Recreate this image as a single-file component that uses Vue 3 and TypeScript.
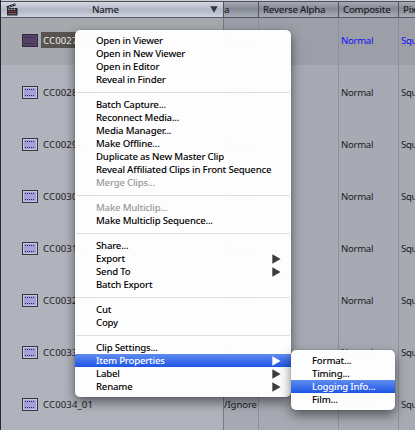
<script setup lang="ts">
interface Clip {
  name: string
  selected?: boolean
}
interface MenuItem {
  label: string
  arrow?: boolean
  disabled?: boolean
  active?: boolean
}

const clips: Clip[] = [
  { name: 'CC0027_01', selected: true },
  { name: 'CC0028_01' },
  { name: 'CC0029_01' },
  { name: 'CC0030_01' },
  { name: 'CC0031_01' },
  { name: 'CC0032_01' },
  { name: 'CC0033_01' },
  { name: 'CC0034_01' },
]

const groups: MenuItem[][] = [
  [
    { label: 'Open in Viewer' },
    { label: 'Open in New Viewer' },
    { label: 'Open in Editor' },
    { label: 'Reveal in Finder' },
  ],
  [
    { label: 'Batch Capture...' },
    { label: 'Reconnect Media...' },
    { label: 'Media Manager...' },
    { label: 'Make Offline...' },
    { label: 'Duplicate as New Master Clip' },
    { label: 'Reveal Affiliated Clips in Front Sequence' },
    { label: 'Merge Clips...', disabled: true },
  ],
  [{ label: 'Make Multiclip...', disabled: true }, { label: 'Make Multiclip Sequence...' }],
  [
    { label: 'Share...' },
    { label: 'Export', arrow: true },
    { label: 'Send To', arrow: true },
    { label: 'Batch Export' },
  ],
  [{ label: 'Cut' }, { label: 'Copy' }],
  [
    { label: 'Clip Settings...' },
    { label: 'Item Properties', arrow: true, active: true },
    { label: 'Label', arrow: true },
    { label: 'Rename', arrow: true },
  ],
]

const submenu: MenuItem[] = [
  { label: 'Format...' },
  { label: 'Timing...' },
  { label: 'Logging Info...', active: true },
  { label: 'Film...' },
]
</script>

<template>
  <div class="window">
    <div class="browser">
      <div class="row header">
        <div class="cell name-head">
          <svg class="clapper" width="12" height="13" viewBox="0 0 12 13">
            <path d="M0.5 3.2 L9.2 0.3 L10 2.4 L1.2 5.2 Z" fill="#24262b" />
            <path d="M2.8 2.8 l1.5 1.1 M5.4 1.9 l1.5 1.1 M8 1.1 l1.3 1" stroke="#d5d8df" stroke-width="0.8" />
            <rect x="1" y="5" width="10.5" height="7.5" rx="0.6" fill="#24262b" />
            <path d="M2 6.3 h1.6 M4.8 6.3 h1.6 M7.6 6.3 h1.6" stroke="#d5d8df" stroke-width="1" />
            <path d="M2.2 8.5 h8" stroke="#9b3037" stroke-width="1" />
            <path d="M2.2 10.7 h8" stroke="#8b8e98" stroke-width="0.8" />
          </svg>
          <span>Name</span>
          <svg class="sort" width="8" height="7" viewBox="0 0 8 7"><path d="M0.3 0.3 H7.7 L4 6.8 Z" fill="#33363d" /></svg>
        </div>
        <div class="cell media-head">a</div>
        <div class="cell alpha-head">Reverse Alpha</div>
        <div class="cell comp-head">Composite</div>
        <div class="cell pixel-head">Pixel</div>
      </div>
      <div v-for="clip in clips" :key="clip.name" class="row" :class="{ selected: clip.selected }">
        <div class="cell name">
          <svg class="clip-icon" width="16" height="13" viewBox="0 0 16 13">
            <rect width="16" height="13" class="edge" />
            <rect x="1" y="1" width="14" height="11" class="rim" />
            <rect x="2" y="2" width="12" height="9" class="face" />
            <path d="M3 3.5 H13 M3 9.5 H13" class="holes" stroke-dasharray="1 1" />
          </svg>
          <span class="clip-name">{{ clip.name }}</span>
        </div>
        <div class="cell media">/Ignore</div>
        <div class="cell"></div>
        <div class="cell comp">Normal</div>
        <div class="cell pixel">Square</div>
      </div>
    </div>

    <div class="menu main-menu">
      <template v-for="(group, g) in groups" :key="g">
        <div v-if="g > 0" class="separator"></div>
        <div
          v-for="item in group"
          :key="item.label"
          class="item"
          :class="{ active: item.active, disabled: item.disabled }"
        >
          <span>{{ item.label }}</span>
          <svg v-if="item.arrow" class="arrow" width="9" height="10" viewBox="0 0 9 10"><path d="M0.3 0.2 L8.6 5 L0.3 9.8 Z" /></svg>
        </div>
      </template>
    </div>

    <div class="menu sub-menu">
      <div v-for="item in submenu" :key="item.label" class="item" :class="{ active: item.active }">
        <span>{{ item.label }}</span>
      </div>
    </div>
  </div>
</template>

<style>
body {
  margin: 0;
  overflow: hidden;
}
</style>

<style scoped>
.window {
  position: relative;
  box-sizing: border-box;
  width: 415px;
  height: 430px;
  overflow: hidden;
  border-left: 1px solid #25263a;
  background: #b0b3bb;
  font-family: 'Noto Sans', 'Open Sans', sans-serif;
  font-size: 9.6px;
  color: #1e2026;
}
.browser {
  border-top: 1px solid #c9cfcf;
}
.row {
  display: grid;
  grid-template-columns: 222px 35px 80px 60px 17px;
  height: 52px;
}
.row:last-child {
  height: 53px;
}
.cell {
  box-sizing: border-box;
  overflow: hidden;
  white-space: nowrap;
  background: #a7aab3;
  border-left: 1px solid #8e919b;
  padding-top: 20px;
  line-height: 16px;
  letter-spacing: -0.3px;
}
.cell:nth-child(2) {
  border-left-color: #777a82;
}
.cell.name {
  display: flex;
  align-items: flex-start;
  border-left: 0;
  background: #b0b3bb;
  padding: 21px 0 0 21px;
  letter-spacing: 0.1px;
}
.clip-name {
  margin: -1px 0 0 3px;
  padding: 0 2px;
  line-height: 16px;
}
.cell.media {
  letter-spacing: -0.1px;
}
.cell.comp,
.cell.pixel {
  padding-left: 2px;
}
.clip-icon {
  flex: none;
}
.edge {
  fill: #35353b;
}
.rim {
  fill: #c3c4e0;
}
.face {
  fill: #a4a2dc;
}
.holes {
  stroke: #252440;
  stroke-width: 1;
}

.selected {
  height: 47px;
}
.selected .cell {
  background: #9c9ea8;
  padding-top: 15px;
}
.selected .cell.name {
  background: #a5a8ad;
  padding-top: 16px;
}
.selected .clip-name {
  margin-top: -2px;
  padding-top: 1px;
  line-height: 15px;
  color: #f0f0ee;
  background: #57534f;
}
.selected .comp,
.selected .pixel {
  color: #1210f4;
}
.selected .edge {
  fill: #33263f;
}
.selected .rim {
  fill: #5a4268;
}
.selected .face {
  fill: #554066;
}

.header {
  box-sizing: border-box;
  height: 17px;
  border-top: 1px solid #4c505a;
  border-bottom: 1px solid #555965;
}
.header .cell {
  border-left-color: #50535e;
  background: linear-gradient(#a8abb5, #848894 45%, #9296a2 65%, #a9adb8);
  padding-top: 0;
  line-height: 16px;
  font-weight: 500;
  letter-spacing: -0.2px;
}
.header .cell.name-head {
  display: flex;
  align-items: center;
  border-left: 0;
  background: linear-gradient(#d5d8e0, #b3b8c6 50%, #bbc0ce 70%, #d0d4df);
  padding: 0 5px 0 5px;
}
.clapper {
  margin-right: 74px;
}
.sort {
  margin-left: auto;
}
.alpha-head,
.comp-head,
.pixel-head {
  padding-left: 4px;
}

.menu {
  position: absolute;
  box-sizing: border-box;
  padding: 4px 0;
  border-radius: 5px;
  background: rgba(254, 254, 254, 0.985);
  box-shadow: 0 5px 12px rgba(0, 0, 0, 0.5), 0 0 1px rgba(0, 0, 0, 0.5);
  color: #000;
}
.main-menu {
  left: 74px;
  top: 30px;
  width: 216px;
}
.sub-menu {
  left: 290px;
  top: 350px;
  width: 104px;
}
.item {
  display: flex;
  align-items: center;
  justify-content: space-between;
  height: 13px;
  padding: 0 10px 0 21px;
  line-height: 13px;
  white-space: nowrap;
  font-weight: 500;
  letter-spacing: -0.2px;
}
.item.disabled {
  color: #98989c;
}
.item.active {
  color: #fff;
  background: linear-gradient(#5f8cf0, #1d56e5);
}
.arrow {
  fill: #3c3c3c;
}
.active .arrow {
  fill: #fff;
}
.separator {
  height: 1px;
  margin: 6px 1px 5px;
  background: #dedede;
}
</style>
